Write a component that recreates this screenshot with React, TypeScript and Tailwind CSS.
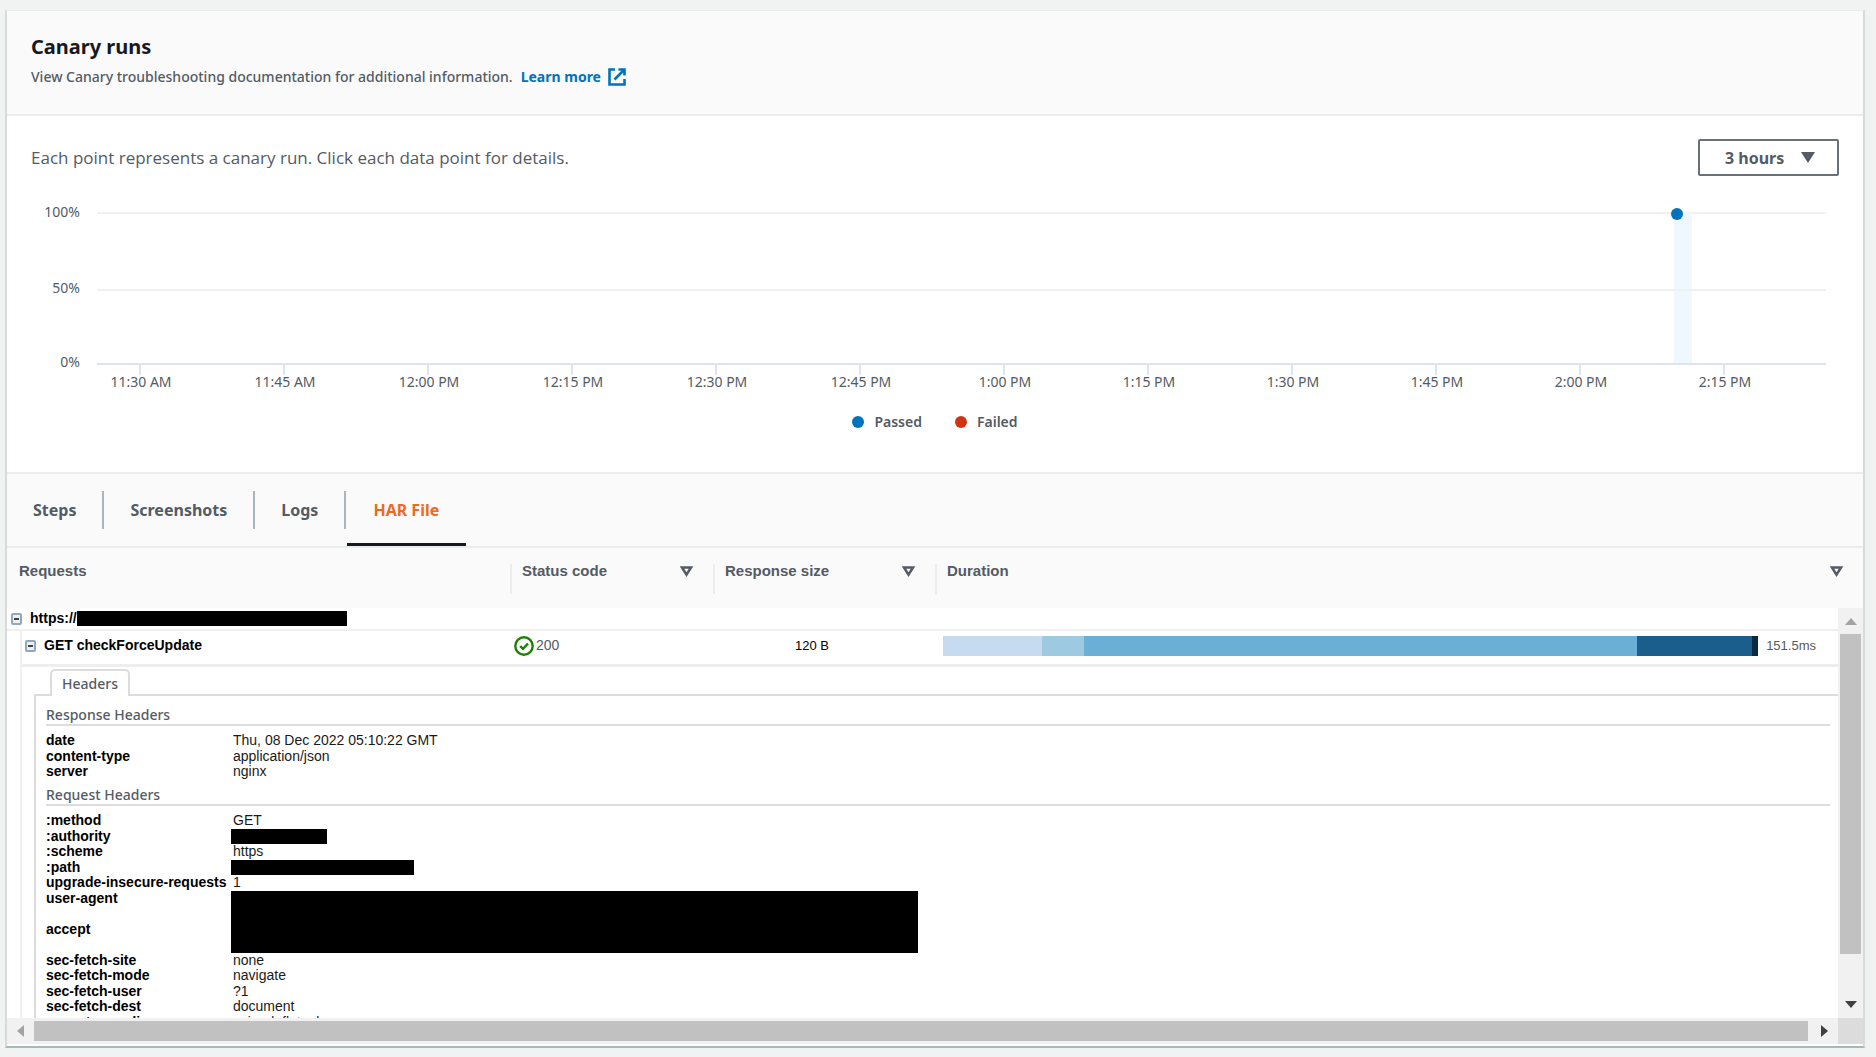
import React from "react";

const ticks = [
  "11:30 AM", "11:45 AM", "12:00 PM", "12:15 PM", "12:30 PM", "12:45 PM",
  "1:00 PM", "1:15 PM", "1:30 PM", "1:45 PM", "2:00 PM", "2:15 PM",
];

const PLOT = 1729;
const pct = (v: number) => `${(v / PLOT) * 100}%`;

function Chart() {
  return (
    <div className="flex pl-6 pr-[37px]">
      <div className="flex w-[66px] shrink-0 flex-col items-end pr-[17px] text-[14px] leading-5 text-[#545b64]">
        <span className="mb-[56px]">100%</span>
        <span className="mb-[54px]">50%</span>
        <span>0%</span>
      </div>
      <svg className="h-[190px] min-w-0 flex-1 overflow-visible" role="img" aria-label="Canary runs chart">
        <rect x="0" y="10" width="100%" height="2" fill="#eff0f1" />
        <rect x={pct(1577)} y="11" width="18" height="150" fill="#f0f8ff" />
        <rect x="0" y="87" width="100%" height="2" fill="#eceff1" fillOpacity="0.9" />
        <rect x="0" y="161" width="100%" height="2" fill="#dfe3f0" />
        {ticks.map((t, i) => (
          <g key={t}>
            <rect x={pct(42 + i * 144)} y="162" width="2" height="11" fill="#dfe3f3" />
            <text x={pct(44 + i * 144)} y="185" textAnchor="middle" fontSize="14" fill="#545b64">{t}</text>
          </g>
        ))}
        <circle cx={pct(1580)} cy="12" r="6" fill="#0073bb" />
      </svg>
    </div>
  );
}

function SortIcon() {
  return (
    <svg viewBox="0 0 13 11" className="h-[11px] w-[13px] shrink-0" aria-hidden="true">
      <path d="M2 1.5h9L6.5 8.6z" fill="none" stroke="#545b64" strokeWidth="2.5" />
    </svg>
  );
}

function Toggle() {
  return (
    <button aria-label="Collapse" className="flex h-3 w-[11px] shrink-0 items-center justify-center rounded-[2px] border-2 border-[#8fa8c0] bg-[#eef0ee]">
      <span className="h-[2px] w-[5px] bg-[#44403a]" />
    </button>
  );
}

type Row = { name: string; value?: string; redact?: string; tall?: boolean };

const responseHeaders: Row[] = [
  { name: "date", value: "Thu, 08 Dec 2022 05:10:22 GMT" },
  { name: "content-type", value: "application/json" },
  { name: "server", value: "nginx" },
];

const requestHeaders: Row[] = [
  { name: ":method", value: "GET" },
  { name: ":authority", redact: "h-[15px] w-24" },
  { name: ":scheme", value: "https" },
  { name: ":path", redact: "h-[15px] w-[183px]" },
  { name: "upgrade-insecure-requests", value: "1" },
  { name: "user-agent", redact: "h-[31px] w-[687px]", tall: true },
  { name: "accept", redact: "h-[31px] w-[687px]", tall: true },
  { name: "sec-fetch-site", value: "none" },
  { name: "sec-fetch-mode", value: "navigate" },
  { name: "sec-fetch-user", value: "?1" },
  { name: "sec-fetch-dest", value: "document" },
  { name: "accept-encoding", value: "gzip, deflate, br" },
];

function HeaderTable({ title, rows }: { title: string; rows: Row[] }) {
  return (
    <section>
      <h3 className="mb-[7px] border-b-2 border-[#dcdcdc] text-[14px] font-medium leading-[18px] text-[#545b64] font-['Noto_Sans',sans-serif]">{title}</h3>
      <table className="w-full table-fixed text-left text-[14px] leading-[15px] text-[#1a1a1a]">
        <tbody>
          {rows.map((r) => (
            <tr key={r.name} className={r.tall ? "h-[31px] align-top" : "h-[15px] align-top odd:h-4"}>
              <th className="w-[185px] p-0 font-bold whitespace-nowrap text-black">{r.name}</th>
              <td className="p-0">
                {r.redact ? <div className={`${r.redact} bg-black`} /> : <span className="pl-[2px]">{r.value}</span>}
              </td>
            </tr>
          ))}
        </tbody>
      </table>
    </section>
  );
}

const tabs = ["Steps", "Screenshots", "Logs"];

export default function App() {
  return (
    <div className="bg-[#f1f3f3] pt-[10px] pr-[11px] pb-[9px] pl-[5px] font-['Noto_Sans',sans-serif] text-[#545b64]">
      <main className="border-x-2 border-t border-b-2 border-[#d5dbdb] border-t-[#eaeded] border-b-[#aab7b8] bg-white">
        <header className="h-[105px] border-b-2 border-[#eaeded] bg-[#fafafa] px-6 pt-[22px]">
          <h1 className="text-[20px] font-bold leading-7 text-[#16191f]">Canary runs</h1>
          <p className="flex items-center pt-1 text-[14px] leading-6 font-medium">
            View Canary troubleshooting documentation for additional information.
            <a href="#" className="ml-2 flex items-center font-bold text-[#0073bb]">
              Learn more
              <svg viewBox="0 0 18 18" className="ml-[7px] h-[18px] w-[18px]" fill="none" stroke="currentColor" strokeWidth="2.6" aria-hidden="true">
                <path d="M7 1.5H1.5v15h15V11M10.5 1.5h6v6M16.5 1.5 6.5 11.5" />
              </svg>
            </a>
          </p>
        </header>

        <section className="pb-10">
          <div className="flex items-start justify-between pt-[23px] pr-6 pl-6">
            <p className="pt-[7px] font-['Open_Sans',sans-serif] text-[17px] leading-6">Each point represents a canary run. Click each data point for details.</p>
            <button className="flex h-[37px] w-[141px] items-center rounded-[2px] border-2 border-[#687078] pl-[25px] text-[16px] font-bold">
              3 hours
              <svg viewBox="0 0 14 11" className="ml-[17px] h-[11px] w-[14px]" aria-hidden="true"><path d="M0 0h14L7 11z" fill="#545b64" /></svg>
            </button>
          </div>
          <div className="pt-[26px]"><Chart /></div>
          <ul className="flex justify-center gap-[33px] pt-5 text-[14px] font-semibold leading-5">
            <li className="flex items-center gap-[10px]"><span className="size-3 rounded-full bg-[#0073bb]" />Passed</li>
            <li className="flex items-center gap-[10px]"><span className="size-3 rounded-full bg-[#d13212]" />Failed</li>
          </ul>
        </section>

        <nav className="flex h-[76px] border-y-2 border-[#eaeded] bg-[#fafafa] text-[16px] font-bold">
          {tabs.map((t) => (
            <button key={t} className="my-[17px] border-r-2 border-[#aab7b8] px-[26px]">{t}</button>
          ))}
          <button className="ml-px border-b-[3px] border-[#16191f] pt-[3px] pr-[27px] pl-[26px] text-[#ee6a22]">HAR File</button>
        </nav>

        <div className="font-['Liberation_Sans',sans-serif]">
          <table className="w-full table-fixed bg-[#fafafa] text-left text-[15px] leading-[14px]">
            <colgroup>
              <col className="w-[503px]" />
              <col className="w-[203px]" />
              <col className="w-[222px]" />
              <col />
            </colgroup>
            <thead>
              <tr className="h-[60px] align-top">
                <th className="px-3 pt-4 font-bold">Requests</th>
                {["Status code", "Response size", "Duration"].map((c) => (
                  <th key={c} className="p-0 pt-4 font-bold">
                    <div className="flex h-[30px] items-start justify-between border-l-2 border-[#eaeded] pr-5 pl-[10px]">
                      {c}
                      <div className="flex h-[14px] items-center"><SortIcon /></div>
                    </div>
                  </th>
                ))}
              </tr>
            </thead>
          </table>

          <div className="grid grid-cols-[1fr_25px] grid-rows-[410px_26px] pb-[2px]">
            <div className="overflow-hidden">
              <div className="flex h-[23px] items-center border-b-2 border-[#f0f0f0] pl-1 text-[14px] font-bold text-black">
                <Toggle />
                <span className="ml-2">https://</span>
                <span className="h-[15px] w-[270px] bg-black" />
              </div>
              <div className="ml-[13px] border-l-2 border-[#f0f0f0]">
                <div className="grid h-9 grid-cols-[488px_203px_222px_1fr] items-center border-b-[3px] border-[#eeeeee] pb-1 text-[14px]">
                  <div className="flex items-center gap-2 pl-[3px] font-bold text-black"><Toggle />GET checkForceUpdate</div>
                  <div className="flex items-center gap-[2px] pl-1">
                    <svg viewBox="0 0 20 20" className="size-5" fill="none" stroke="#1d8102" strokeWidth="2.4" aria-hidden="true"><circle cx="10" cy="10" r="8.7" /><path d="m6.2 10.2 2.8 2.6 5-5.3" /></svg>
                    200
                  </div>
                  <div className="pr-[106px] text-right text-[13px] text-black">120 B</div>
                  <div className="flex h-5 items-center pr-[22px] pl-2">
                    <div className="flex h-5 flex-1">
                      <div className="grow-99 bg-[#c6dbef]" />
                      <div className="grow-42 bg-[#9ecae1]" />
                      <div className="grow-553 bg-[#6baed6]" />
                      <div className="grow-115 bg-[#1b5e8b]" />
                      <div className="grow-6 bg-[#0a2a43]" />
                    </div>
                    <span className="ml-2 text-[13px]">151.5ms</span>
                  </div>
                </div>
                <div className="pt-[2px] pl-3">
                  <div className="flex">
                    <div className="w-4 border-b-2 border-[#dcdcdc]" />
                    <button className="h-[27px] rounded-t-[5px] border-2 border-b-0 border-[#dcdcdc] px-[10px] font-['Noto_Sans',sans-serif] text-[14px] font-medium">Headers</button>
                    <div className="flex-1 border-b-2 border-[#dcdcdc]" />
                  </div>
                  <div className="flex flex-col gap-[6px] border-l-2 border-[#dcdcdc] pt-[10px] pr-2 pl-[10px]">
                    <HeaderTable title="Response Headers" rows={responseHeaders} />
                    <HeaderTable title="Request Headers" rows={requestHeaders} />
                  </div>
                </div>
              </div>
            </div>
            <div className="flex flex-col items-center bg-[#f1f1f1]">
              <div className="flex h-[26px] items-center"><svg viewBox="0 0 12 7" className="h-[7px] w-3" aria-hidden="true"><path d="M0 7h12L6 0z" fill="#a3a3a3" /></svg></div>
              <div className="h-[320px] w-[21px] bg-[#c1c1c1]" />
              <svg viewBox="0 0 12 7" className="mt-auto mb-[10px] h-[7px] w-3" aria-hidden="true"><path d="M0 0h12L6 7z" fill="#404040" /></svg>
            </div>
            <div className="flex items-center bg-[#f1f1f1]">
              <svg viewBox="0 0 7 12" className="mx-[10px] h-3 w-[7px]" aria-hidden="true"><path d="M7 0v12L0 6z" fill="#a3a3a3" /></svg>
              <div className="h-5 flex-1 bg-[#c1c1c1]" />
              <svg viewBox="0 0 7 12" className="mr-[10px] ml-[13px] h-3 w-[7px]" aria-hidden="true"><path d="M0 0v12l7-6z" fill="#404040" /></svg>
            </div>
            <div className="bg-[#dcdcdc]" />
          </div>
        </div>
      </main>
    </div>
  );
}
